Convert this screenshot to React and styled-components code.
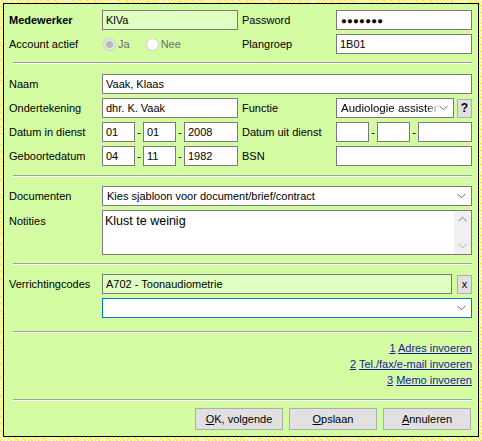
import React from 'react';
import styled, { createGlobalStyle, css } from 'styled-components';

const GlobalStyle = createGlobalStyle`
  html, body {
    margin: 0;
    padding: 0;
  }
  body {
    width: 482px;
    height: 441px;
    overflow: hidden;
    font-family: 'Liberation Sans', Arial, sans-serif;
    font-size: 11px;
    color: #000;
    background: repeating-linear-gradient(
      45deg,
      #f3ec3c 0px,
      #f3ec3c 1px,
      #fffbd0 1px,
      #fffbd0 2.5px
    );
  }
`;

const Panel = styled.div`
  box-sizing: border-box;
  margin: 3px 3px 4px 3px;
  width: 476px;
  height: 434px;
  border: 1px solid #000;
  background: #d3fca3;
  padding: 6px 6px 0 5px;
  display: flex;
  flex-direction: column;
`;

const FormGrid = styled.div`
  display: grid;
  grid-template-columns: 93px 136px 98px 136px;
  grid-auto-rows: ${p => p.$rowHeight || 20}px;
  row-gap: 4px;
`;

const Label = styled.div`
  display: flex;
  align-items: ${p => (p.$top ? 'flex-start' : 'center')};
  padding-left: ${p => p.$indent || 0}px;
  padding-top: ${p => (p.$top ? 5 : 0)}px;
  font-weight: ${p => (p.$bold ? 'bold' : 'normal')};
  white-space: nowrap;
`;

const fieldBase = css`
  box-sizing: border-box;
  height: 20px;
  border: 1px solid #7a7a7a;
  background: ${p => p.$bg || '#fff'};
  font-family: 'Liberation Sans', Arial, sans-serif;
  font-size: 11px;
  color: #000;
  padding: 0 3px;
  outline: none;
  margin: 0;
`;

const TextInput = styled.input`
  ${fieldBase};
  width: ${p => (p.$width ? `${p.$width}px` : '100%')};
  ${p => p.$wide && css`grid-column: 2 / span 3;`}
`;

const PasswordDots = styled.div`
  ${fieldBase};
  display: flex;
  align-items: center;
  font-size: 9.5px;
  letter-spacing: 0.3px;
  padding-left: 4px;
`;

const RadioRow = styled.div`
  display: flex;
  align-items: center;
  padding-left: 1px;
`;

const RadioItem = styled.label`
  display: flex;
  align-items: center;
  color: #6d6d6d;
  margin-right: ${p => p.$gap || 0}px;
`;

const RadioCircle = styled.span`
  box-sizing: border-box;
  width: 13px;
  height: 13px;
  border-radius: 50%;
  border: 1px solid #cccccc;
  background: ${p => (p.$checked ? '#e6e6e6' : '#fff')};
  margin-right: 2px;
  display: flex;
  align-items: center;
  justify-content: center;
  &::after {
    content: '';
    display: ${p => (p.$checked ? 'block' : 'none')};
    width: 7px;
    height: 7px;
    border-radius: 50%;
    background: #b8b8b8;
  }
`;

const Divider = styled.div`
  height: 0;
  border-top: 1px solid #a0a0a0;
  border-bottom: 1px solid #fff;
  margin: ${p => p.$top}px 0 ${p => p.$bottom}px 4px;
`;

const DateGroup = styled.div`
  display: flex;
  align-items: stretch;
`;

const Dash = styled.span`
  width: 8px;
  display: flex;
  align-items: center;
  justify-content: center;
`;

const SelectBox = styled.div`
  ${fieldBase};
  display: flex;
  align-items: center;
  justify-content: space-between;
  padding: 0 5px 0 4px;
  overflow: hidden;
  white-space: nowrap;
  border-color: ${p => (p.$focused ? '#0078d7' : '#7a7a7a')};
  ${p => p.$wide && css`grid-column: 2 / span 3;`}
`;

const SelectText = styled.span`
  overflow: hidden;
  flex: 1;
  font-size: ${p => p.$size || 11}px;
  -webkit-mask-image: ${p => (p.$fade ? 'linear-gradient(to right, #000 88%, transparent 100%)' : 'none')};
`;

const FieldWithButton = styled.div`
  display: flex;
  align-items: center;
  justify-content: space-between;
  ${p => p.$wide && css`grid-column: 2 / span 3;`}
`;

const SmallButton = styled.button`
  box-sizing: border-box;
  width: 15px;
  height: ${p => p.$height || 19}px;
  padding: 0;
  margin: 0;
  border: 1px solid #adadad;
  background: #e1e1e1;
  font-family: 'Liberation Sans', Arial, sans-serif;
  font-size: ${p => p.$size || 11}px;
  font-weight: ${p => (p.$bold ? 'bold' : 'normal')};
  color: #000;
  display: flex;
  align-items: center;
  justify-content: center;
  line-height: 1;
`;

const TextArea = styled.div`
  grid-column: 2 / span 3;
  box-sizing: border-box;
  height: 45px;
  border: 1px solid #7a7a7a;
  background: #fff;
  display: flex;
`;

const TextAreaBody = styled.div`
  flex: 1;
  padding: 3px 2px;
  font-size: 12.5px;
`;

const ScrollTrack = styled.div`
  width: 17px;
  background: #f0f0f0;
  display: flex;
  flex-direction: column;
  justify-content: space-between;
  align-items: center;
  padding: 5px 0;
`;

const Links = styled.div`
  display: flex;
  flex-direction: column;
  align-items: flex-end;
  padding-top: 7px;
  line-height: 16px;
`;

const LinkRow = styled.div`
  color: #1a1aa0;
  white-space: nowrap;
`;

const U = styled.span`
  text-decoration: underline;
`;

const Buttons = styled.div`
  display: flex;
  justify-content: flex-end;
  gap: 6px;
  padding-right: 1px;
`;

const Button = styled.button`
  box-sizing: border-box;
  width: 88px;
  height: 22px;
  border: 1px solid #adadad;
  background: #e1e1e1;
  font-family: 'Liberation Sans', Arial, sans-serif;
  font-size: 11px;
  color: #000;
  padding: 0;
  margin: 0;
`;

const Chevron = ({ color = '#666' }) => (
  <svg width="9" height="6" viewBox="0 0 9 6">
    <polyline points="0.5,0.8 4.5,4.8 8.5,0.8" fill="none" stroke={color} strokeWidth="1" />
  </svg>
);

const ChevronUp = () => (
  <svg width="9" height="6" viewBox="0 0 9 6">
    <polyline points="0.5,5.2 4.5,1.2 8.5,5.2" fill="none" stroke="#b0b0b0" strokeWidth="1.4" />
  </svg>
);

const DateInputs = ({ values = ['', '', ''] }) => (
  <DateGroup>
    <TextInput $width={33} defaultValue={values[0]} />
    <Dash>-</Dash>
    <TextInput $width={33} defaultValue={values[1]} />
    <Dash>-</Dash>
    <TextInput $width={54} defaultValue={values[2]} />
  </DateGroup>
);

const App = () => (
  <>
    <GlobalStyle />
    <Panel>
      <FormGrid>
        <Label $bold>Medewerker</Label>
        <TextInput $bg="#dfffc2" defaultValue="KlVa" />
        <Label $indent={4}>Password</Label>
        <PasswordDots>●●●●●●●</PasswordDots>

        <Label>Account actief</Label>
        <RadioRow>
          <RadioItem $gap={16}>
            <RadioCircle $checked />
            Ja
          </RadioItem>
          <RadioItem>
            <RadioCircle />
            Nee
          </RadioItem>
        </RadioRow>
        <Label $indent={4}>Plangroep</Label>
        <TextInput defaultValue="1B01" />
      </FormGrid>

      <Divider $top={8} $bottom={10} />

      <FormGrid>
        <Label>Naam</Label>
        <TextInput $wide defaultValue="Vaak, Klaas" />

        <Label>Ondertekening</Label>
        <TextInput defaultValue="dhr. K. Vaak" />
        <Label $indent={4}>Functie</Label>
        <FieldWithButton>
          <SelectBox style={{ width: 118 }}>
            <SelectText $fade $size={11.5}>Audiologie assistenti</SelectText>
            <Chevron />
          </SelectBox>
          <SmallButton $bold $size={12}>?</SmallButton>
        </FieldWithButton>

        <Label>Datum in dienst</Label>
        <DateInputs values={['01', '01', '2008']} />
        <Label $indent={4}>Datum uit dienst</Label>
        <DateInputs />

        <Label>Geboortedatum</Label>
        <DateInputs values={['04', '11', '1982']} />
        <Label $indent={4}>BSN</Label>
        <TextInput />
      </FormGrid>

      <Divider $top={9} $bottom={9} />

      <FormGrid $rowHeight="auto">
        <Label style={{ height: 20 }}>Documenten</Label>
        <SelectBox $wide>
          <SelectText>Kies sjabloon voor document/brief/contract</SelectText>
          <Chevron />
        </SelectBox>

        <Label $top>Notities</Label>
        <TextArea>
          <TextAreaBody>Klust te weinig</TextAreaBody>
          <ScrollTrack>
            <ChevronUp />
            <Chevron color="#b0b0b0" />
          </ScrollTrack>
        </TextArea>
      </FormGrid>

      <Divider $top={8} $bottom={9} />

      <FormGrid>
        <Label>Verrichtingcodes</Label>
        <FieldWithButton $wide>
          <TextInput $bg="#dfffc2" $width={350} defaultValue="A702 - Toonaudiometrie" />
          <SmallButton>x</SmallButton>
        </FieldWithButton>

        <span />
        <SelectBox $wide $focused>
          <span />
          <Chevron />
        </SelectBox>
      </FormGrid>

      <Divider $top={13} $bottom={0} />

      <Links>
        <LinkRow>
          <U>1</U> <U>Adres invoeren</U>
        </LinkRow>
        <LinkRow>
          <U>2</U> <U>Tel./fax/e-mail invoeren</U>
        </LinkRow>
        <LinkRow>
          <U>3</U> <U>Memo invoeren</U>
        </LinkRow>
      </Links>

      <Divider $top={11} $bottom={7} />

      <Buttons>
        <Button>
          <U>O</U>K, volgende
        </Button>
        <Button>
          <U>O</U>pslaan
        </Button>
        <Button>
          <U>A</U>nnuleren
        </Button>
      </Buttons>
    </Panel>
  </>
);

export default App;
